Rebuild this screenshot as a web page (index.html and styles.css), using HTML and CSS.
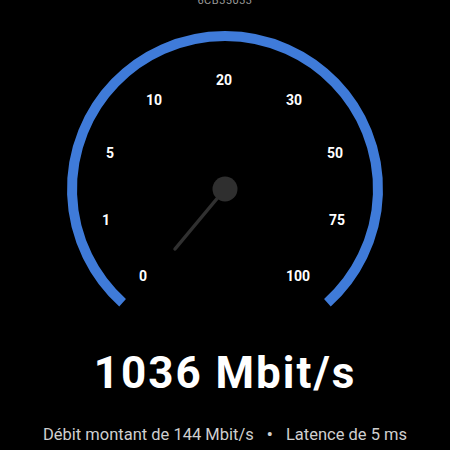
FILE: index.html
```html
<!DOCTYPE html>
<html>
<head>
  <title>Speed test</title>
  <link rel="stylesheet" href="styles.css">
</head>
<body>
  <div class="screen">
    <div class="serial">6CB35033</div>

    <!-- gauge: viewBox offset so coordinates match the page -->
    <svg class="gauge" width="450" height="304" viewBox="0 6 450 304">
      <path class="track" d="M 122.6 302.7 A 153 153 0 1 1 327.4 302.7" />
      <text x="143" y="281">0</text>
      <text x="106" y="225">1</text>
      <text x="110" y="158">5</text>
      <text x="154" y="105">10</text>
      <text x="224" y="85">20</text>
      <text x="294" y="105">30</text>
      <text x="335" y="158">50</text>
      <text x="337" y="225">75</text>
      <text x="298" y="281">100</text>
      <line class="needle" x1="225" y1="189" x2="175" y2="249" />
      <circle class="hub" cx="225" cy="189" r="12.5" />
    </svg>

    <div class="speed">1036 Mbit/s</div>
    <div class="details">Débit montant de 144 Mbit/s <span class="dot">•</span> Latence de 5 ms</div>
  </div>
</body>
</html>
```

FILE: styles.css
```css
body {
  margin: 0;
  background-color: #000;
  font-family: Roboto, "Liberation Sans", sans-serif;
}

.screen {
  width: 450px;
  height: 450px;
  overflow: hidden;
  display: flex;
  flex-direction: column;
  align-items: center;
}

.serial {
  margin-top: -5px;
  height: 11px;
  font-size: 11px;
  line-height: 11px;
  color: #9a9a9a;
  letter-spacing: 0.5px;
}

.gauge {
  display: block;
}

.gauge .track {
  fill: none;
  stroke: #3f7bd9;
  stroke-width: 10;
}

.gauge text {
  fill: #fff;
  font-family: Roboto, "Liberation Sans", sans-serif;
  font-weight: bold;
  font-size: 14px;
  text-anchor: middle;
}

.gauge .needle {
  stroke: #303030;
  stroke-width: 3.5;
  stroke-linecap: round;
}

.gauge .hub {
  fill: #2f2f2f;
}

.speed {
  margin-top: 39px;
  font-size: 44px;
  line-height: 48px;
  font-weight: bold;
  letter-spacing: 2px;
  color: #fff;
}

.details {
  margin-top: 28px;
  font-size: 16.5px;
  line-height: 20px;
  color: #cfcfcf;
}

.details .dot {
  margin: 0 9px;
  font-weight: bold;
}
```
